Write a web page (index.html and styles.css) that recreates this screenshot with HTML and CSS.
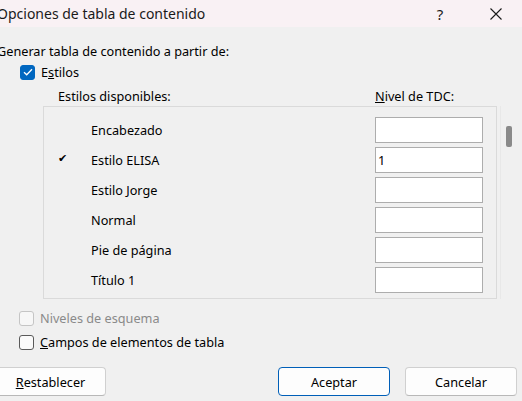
FILE: index.html
```html
<!DOCTYPE html>
<html lang="es">
<head>
<meta charset="utf-8">
<link rel="stylesheet" href="styles.css">
</head>
<body>
<div class="dialog">
  <div class="titlebar">
    <span class="title">Opciones de tabla de contenido</span>
    <span class="help">?</span>
    <span class="close">
      <svg width="12" height="12" viewBox="0 0 12 12"><path d="M0.5 0.5 L11.5 11.5 M11.5 0.5 L0.5 11.5" stroke="#1a1a1a" stroke-width="1.1" fill="none"/></svg>
    </span>
  </div>
  <div class="content">
    <div class="heading">Generar tabla de contenido a partir de:</div>
    <label class="check-row styles-row">
      <span class="cb checked">
        <svg width="10" height="8" viewBox="0 0 10 8"><path d="M1 4.2 L3.7 6.8 L9 1.2" stroke="#fff" stroke-width="1.3" fill="none"/></svg>
      </span>
      <span>E<u>s</u>tilos</span>
    </label>
    <div class="cols">
      <span class="col-a">Estilos disponibles:</span>
      <span class="col-b"><u>N</u>ivel de TDC:</span>
    </div>
    <div class="list-wrap">
      <div class="listbox">
        <div class="row"><span class="mark"></span><span class="name">Encabezado</span><span class="field"></span></div>
        <div class="row"><span class="mark">&#10004;</span><span class="name">Estilo ELISA</span><span class="field">1</span></div>
        <div class="row"><span class="mark"></span><span class="name">Estilo Jorge</span><span class="field"></span></div>
        <div class="row"><span class="mark"></span><span class="name">Normal</span><span class="field"></span></div>
        <div class="row"><span class="mark"></span><span class="name">Pie de página</span><span class="field"></span></div>
        <div class="row"><span class="mark"></span><span class="name">Título 1</span><span class="field"></span></div>
      </div>
      <div class="scrollbar"><div class="thumb"></div></div>
    </div>
    <label class="check-row disabled outline-row">
      <span class="cb"></span>
      <span>Niveles de esquema</span>
    </label>
    <label class="check-row fields-row">
      <span class="cb dark"></span>
      <span><u>C</u>ampos de elementos de tabla</span>
    </label>
    <div class="buttons">
      <button class="btn reset"><u>R</u>establecer</button>
      <span class="spacer"></span>
      <button class="btn primary">Aceptar</button>
      <button class="btn cancel">Cancelar</button>
    </div>
  </div>
</div>
</body>
</html>
```
FILE: styles.css
```css
* { box-sizing: border-box; }
html, body {
  margin: 0;
  padding: 0;
  background: #f0f0f0;
  width: 522px;
  height: 401px;
  overflow: hidden;
}
body {
  font-family: "Segoe UI", "Noto Sans", "Open Sans", sans-serif;
  font-size: 12.7px;
  color: #000;
}
.dialog {
  width: 522px;
  height: 401px;
}
.titlebar {
  height: 27px;
  background: #f9f1f4;
  display: flex;
  align-items: center;
}
.title {
  font-size: 14px;
  color: #1a1a1a;
  margin-left: -3px;
  flex: 1;
  padding-bottom: 1px;
}
.help {
  font-size: 15px;
  color: #1a1a1a;
  width: 20px;
  text-align: center;
  margin-right: 40px;
}
.close {
  width: 12px;
  height: 12px;
  display: flex;
  margin-right: 20px;
}
.content {
  display: flex;
  flex-direction: column;
}
.heading {
  margin-left: -3px;
  margin-top: 15px;
  height: 18px;
  line-height: 18px;
}
.check-row {
  display: flex;
  align-items: center;
  height: 18px;
  line-height: 18px;
}
.styles-row {
  margin-top: 3px;
  padding-left: 20px;
}
.cb {
  width: 15px;
  height: 15px;
  border: 1px solid #c5c5c5;
  border-radius: 3px;
  margin-right: 6px;
  display: flex;
  align-items: center;
  justify-content: center;
  background: #f7f7f7;
}
.cb.checked {
  background: #0067c0;
  border-color: #0067c0;
}
.cb.dark {
  border-color: #5a5a5a;
  background: #fafafa;
}
.disabled { color: #8a8a8a; }
.cols {
  display: flex;
  margin-top: 6px;
  height: 18px;
  line-height: 18px;
}
.col-a { margin-left: 58px; width: 317px; }
.list-wrap {
  display: flex;
  margin-top: 1px;
}
.listbox {
  margin-left: 43px;
  width: 454px;
  height: 193px;
  border: 1px solid #dadada;
  padding-top: 8px;
  display: flex;
  flex-direction: column;
}
.row {
  height: 30px;
  display: flex;
  align-items: center;
}
.mark {
  width: 47px;
  padding-left: 14px;
  font-size: 11px;
  padding-bottom: 5px;
}
.name { width: 284px; }
.field {
  width: 108px;
  height: 26px;
  background: #fff;
  border: 1px solid #adadad;
  padding-left: 2px;
  line-height: 24px;
}
.scrollbar {
  width: 16px;
  border-left: 1px solid #e8e8e8;
  margin-left: 3px;
  display: flex;
  justify-content: center;
  padding-top: 20px;
}
.thumb {
  width: 6px;
  height: 21px;
  background: #8a8a8a;
  border-radius: 2px;
}
.outline-row { margin-top: 10px; padding-left: 19px; }
.fields-row { margin-top: 6px; padding-left: 19px; }
.buttons {
  display: flex;
  margin-top: 16px;
}
.btn {
  height: 29px;
  font: inherit;
  background: #fdfdfd;
  border: 1px solid #d0d0d0;
  border-bottom-color: #b8b8b8;
  border-radius: 4px;
  padding: 0;
  color: #000;
}
.reset { width: 111px; margin-left: -5px; }
.spacer { flex: 1; }
.primary {
  width: 112px;
  border: 1px solid #005fb8;
}
.cancel { width: 112px; margin-left: 15px; margin-right: 5px; }
```
